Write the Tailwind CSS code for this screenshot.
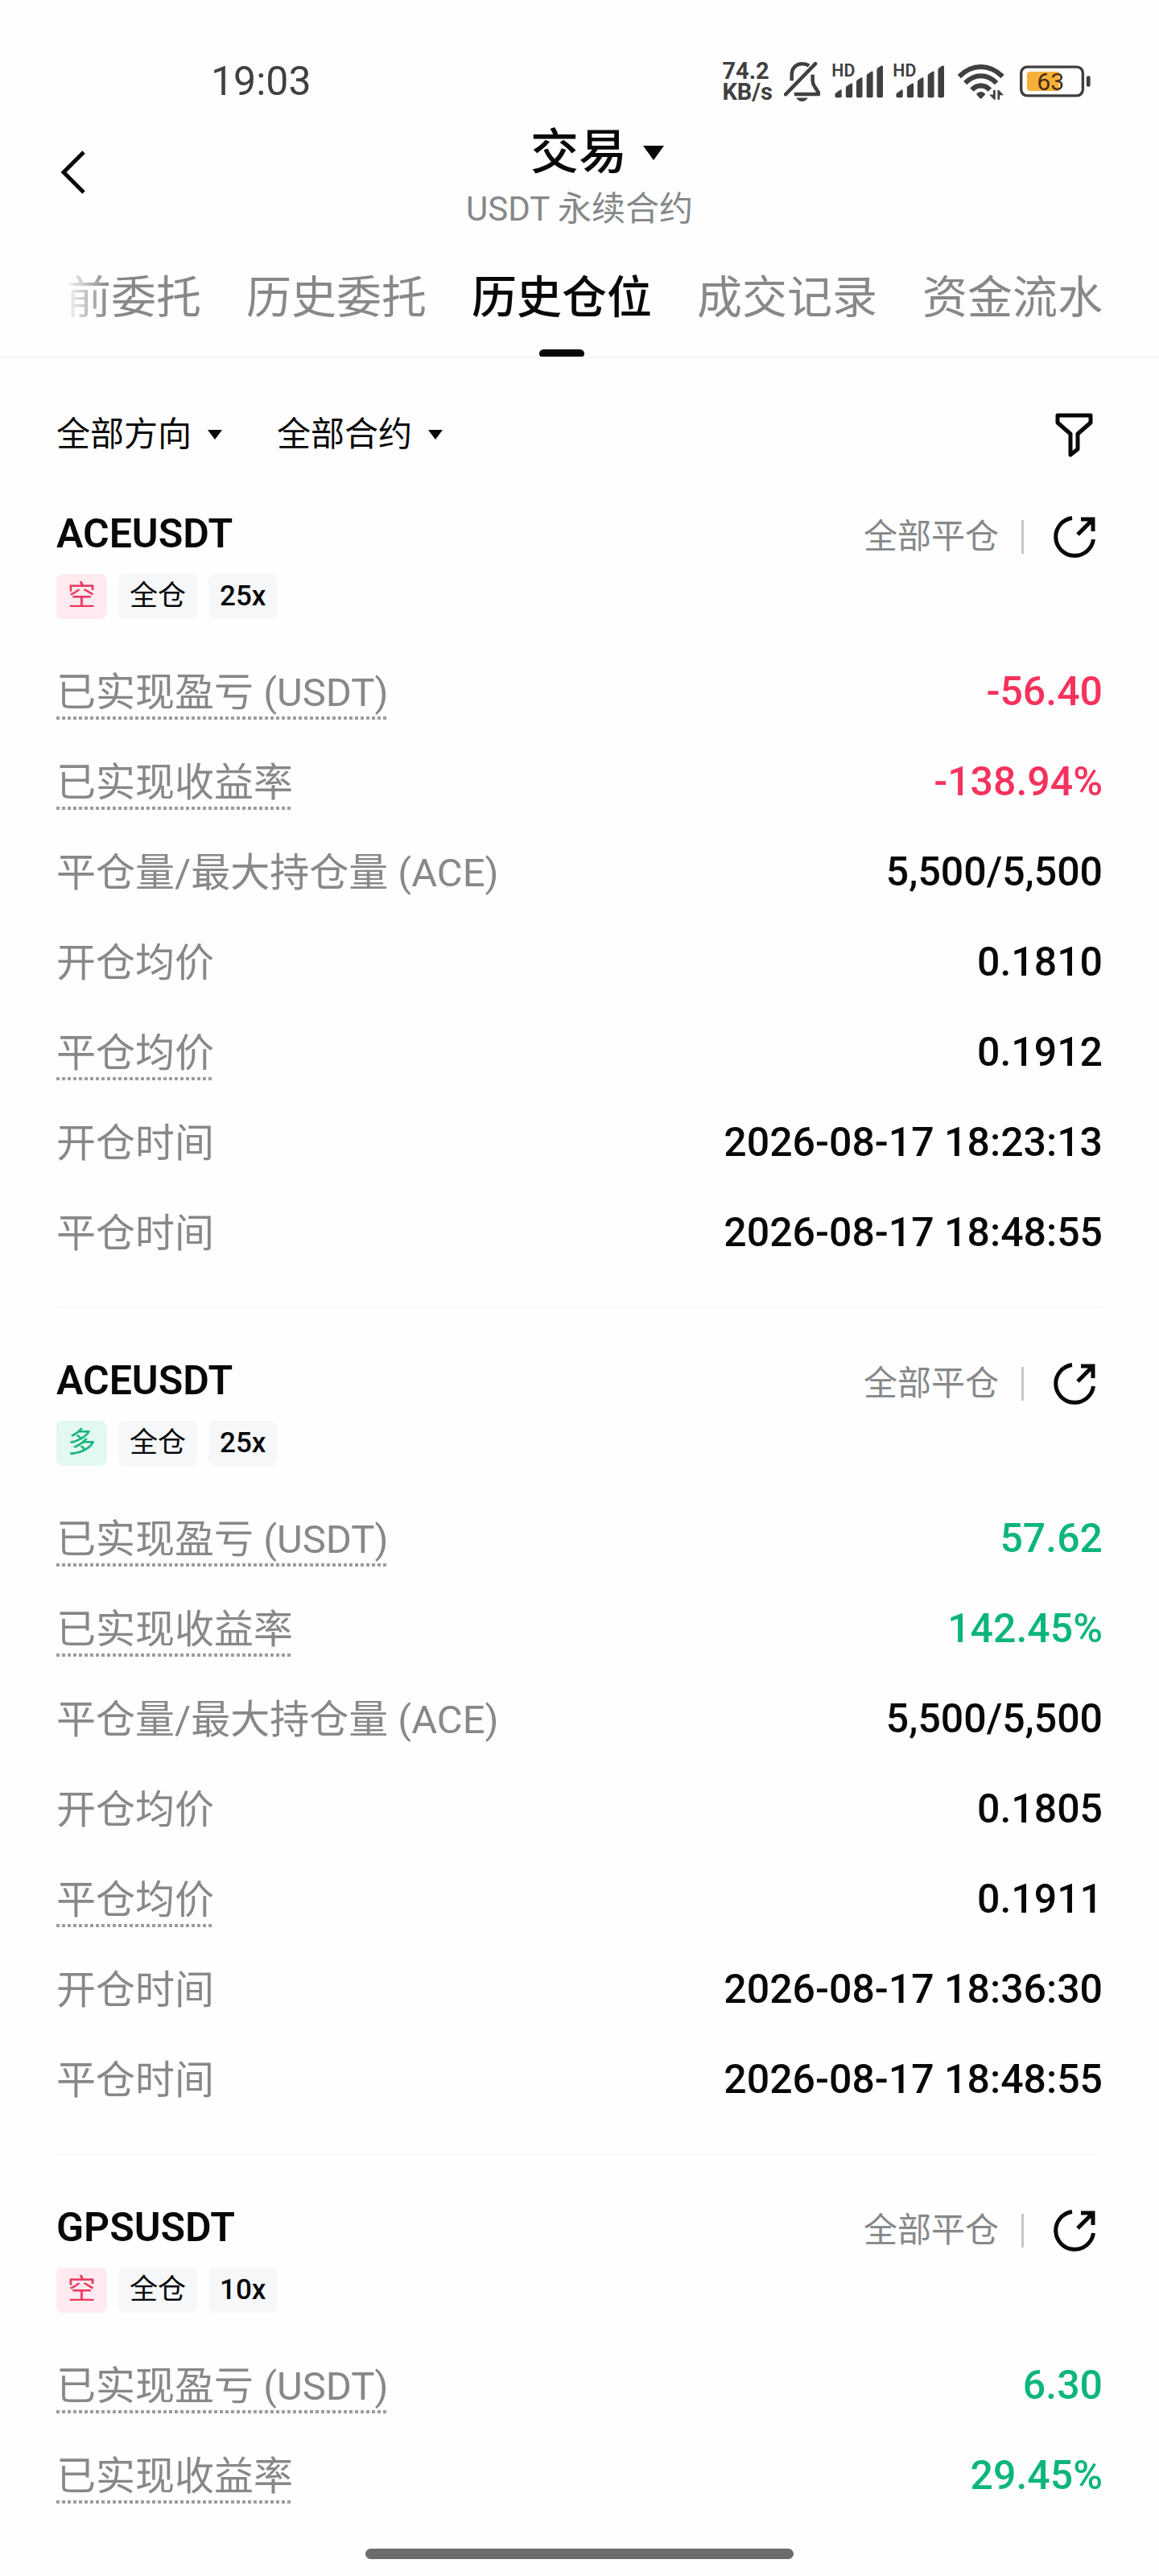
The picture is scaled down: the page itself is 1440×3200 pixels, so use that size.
<!DOCTYPE html>
<html lang="zh-CN">
<head>
    <title>交易 - 历史仓位</title>
    <meta charset="utf-8" />
    <meta name="viewport" content="width=device-width, initial-scale=1.0">
    <script src="https://cdn.jsdelivr.net/npm/@tailwindcss/browser@4"></script>
</head>
<body class="relative flex min-h-screen flex-col bg-[#fefefe] font-[Roboto,'Noto_Sans_CJK_SC',sans-serif] text-[#070808]">

    <!-- Status bar -->
    <div class="flex h-[150px] items-center justify-between pt-[52px] pr-[85px] pl-[262px] text-[#404040]">
        <span class="text-[50px] leading-none">19:03</span>
        <div class="flex items-center">
            <div class="mr-[14px] text-[29px] leading-[26px] font-bold">
                <div>74.2</div>
                <div>KB/s</div>
            </div>
            <!-- Muted bell -->
            <svg class="mr-[15px] h-[50px] w-[45px]" viewBox="334 78 130 144" fill="none" stroke="currentColor">
                <path d="M362 148v-22c0-24 16-39 38-39 9 0 17 2 24 7" stroke-width="13"/>
                <path d="M437 126v22c0 10 3 16 9 24l13 20c2 3 1 4-2 4h-86" stroke-width="13"/>
                <path d="M340 197L447 87" stroke-width="13" stroke-linecap="round"/>
                <path d="M378 209h42c-4 8-12 13-21 13s-17-5-21-13z" fill="currentColor" stroke="none"/>
            </svg>
            <!-- Signal 1 -->
            <svg class="mr-[13px] h-[42px] w-[63px] overflow-visible" viewBox="505 88 183 122" fill="currentColor">
                <text x="503" y="132" font-size="62" font-weight="600" font-family="Roboto">HD</text>
                <path d="M515 197q0-4 3-6l15-11q6-3 6 4v19q0 5-5 5h-14q-5 0-5-5zM554 172q0-4 4-6l14-9q6-3 6 3v43q0 5-5 5h-14q-5 0-5-5zM592 151q0-5 4-7l12-8q6-3 6 3v64q0 5-5 5h-12q-5 0-5-5zM629 129q0-5 4-7l12-8q7-3 7 3v86q0 5-5 5h-13q-5 0-5-5zM666 107q0-5 4-7l11-7q7-3 7 3v107q0 5-5 5h-12q-5 0-5-5z"/>
            </svg>
            <!-- Signal 2 -->
            <svg class="mr-[17px] h-[42px] w-[63px] overflow-visible" viewBox="505 88 183 122" fill="currentColor">
                <text x="503" y="132" font-size="62" font-weight="600" font-family="Roboto">HD</text>
                <path d="M515 197q0-4 3-6l15-11q6-3 6 4v19q0 5-5 5h-14q-5 0-5-5zM554 172q0-4 4-6l14-9q6-3 6 3v43q0 5-5 5h-14q-5 0-5-5zM592 151q0-5 4-7l12-8q6-3 6 3v64q0 5-5 5h-12q-5 0-5-5zM629 129q0-5 4-7l12-8q7-3 7 3v86q0 5-5 5h-13q-5 0-5-5zM666 107q0-5 4-7l11-7q7-3 7 3v107q0 5-5 5h-12q-5 0-5-5z"/>
            </svg>
            <!-- Wi-Fi -->
            <svg class="mr-[19px] h-[45px] w-[58px]" viewBox="958 84 170 132" fill="none" stroke="currentColor">
                <path d="M963 131c48-47 110-47 158 0" stroke-width="18"/>
                <path d="M985 155c34-35 80-35 114 0" stroke-width="18"/>
                <path d="M1009 180c20-21 46-21 66 0" stroke-width="18"/>
                <path d="M1026 194q16-14 32 0 0 3-3 6l-10 11q-3 2-6 0l-10-11q-3-3-3-6z" fill="currentColor" stroke="none"/>
                <path d="M1095 181v34h-5l-17-18h14v-16zM1103 215v-34h5l17 18h-14v16z" fill="currentColor" stroke="none"/>
            </svg>
            <!-- Battery -->
            <svg class="h-[40px] w-[88px]" viewBox="1182 90 256 116">
                <rect x="1187" y="96" width="223" height="104" rx="22" fill="none" stroke="#404040" stroke-width="10"/>
                <path d="M1220 113h104v70h-104q-12 0-12-12v-46q0-12 12-12z" fill="#f5b03a"/>
                <rect x="1423" y="128" width="14" height="40" rx="7" fill="#404040"/>
                <text x="1293" y="180" text-anchor="middle" font-size="88" font-family="Roboto" fill="#4a2c12">63</text>
            </svg>
        </div>
    </div>

    <!-- Page header -->
    <header class="grid grid-cols-[1fr_auto_1fr] items-start px-[70px]">
        <button type="button" aria-label="返回" class="mt-[36px] justify-self-start pl-1">
            <svg class="h-[56px] w-[34px]" viewBox="0 0 34 56" fill="none" stroke="currentColor" stroke-width="5">
                <path d="M30 3L5 28L30 53"/>
            </svg>
        </button>
        <div class="flex flex-col items-center pt-1">
            <button type="button" aria-haspopup="menu" class="ml-11 flex items-center gap-5 text-[60px] leading-[72px] font-medium">
                交易
                <svg class="h-[18px] w-[26px]" viewBox="0 0 26 18" fill="currentColor"><path d="M0 0h26L13 18z"/></svg>
            </button>
            <p class="text-[42px] leading-[68px] text-[#868889]">USDT 永续合约</p>
        </div>
    </header>

    <!-- Tabs, scrolled to the right end -->
    <nav class="border-b-2 border-[#f4f5f5] px-[70px] pt-[34px]">
        <div class="relative flex h-[115px] justify-end overflow-hidden">
            <div class="flex shrink-0 gap-14 text-[56px] leading-[84px] whitespace-nowrap text-[#868889]">
                <a href="#">当前委托</a>
                <a href="#">历史委托</a>
                <a href="#" class="flex flex-col items-center justify-between font-medium text-[#070808]">
                    历史仓位
                    <span class="h-[9px] w-14 rounded-t-md rounded-b-sm bg-[#070808]"></span>
                </a>
                <a href="#">成交记录</a>
                <a href="#">资金流水</a>
            </div>
            <div class="absolute inset-y-0 left-0 w-16 bg-linear-to-r from-[#fefefe] from-15% to-transparent"></div>
        </div>
    </nav>

    <!-- Filters -->
    <div class="flex h-[190px] items-center px-[70px]">
        <label class="mr-[68px] flex items-center gap-[19px]">
            <select aria-label="方向" class="appearance-none text-[42px] leading-[60px]">
                <option>全部方向</option>
            </select>
            <svg class="h-3 w-[18px]" viewBox="0 0 18 12" fill="currentColor"><path d="M0 0h18L9 12z"/></svg>
        </label>
        <label class="flex items-center gap-[19px]">
            <select aria-label="合约" class="appearance-none text-[42px] leading-[60px]">
                <option>全部合约</option>
            </select>
            <svg class="h-3 w-[18px]" viewBox="0 0 18 12" fill="currentColor"><path d="M0 0h18L9 12z"/></svg>
        </label>
        <button type="button" aria-label="筛选" class="mr-3 ml-auto">
            <svg class="h-[55px] w-[47px]" viewBox="0 0 47 55" fill="none" stroke="currentColor" stroke-width="5" stroke-linejoin="round">
                <path d="M3 3h41v9L28 26v19l-9 7V26L3 12z"/>
            </svg>
        </button>
    </div>

    <main class="px-[70px]">
        <!-- Position 1 -->
        <section class="border-b-2 border-[#f8f8f8] pb-[34px]">
            <div class="flex h-16 items-center">
                <h2 class="mr-auto pb-2 text-[50px] leading-[60px] font-semibold">ACEUSDT</h2>
                <span class="text-[42px] leading-[60px] text-[#868889]">全部平仓</span>
                <span class="mx-[28px] h-[42px] w-[3px] bg-[#c6c7c7]"></span>
                <button type="button" aria-label="分享" class="mr-2 ml-2">
                    <svg class="h-[54px] w-[54px]" viewBox="0 0 54 54" fill="none" stroke="currentColor" stroke-width="5">
                        <path d="M24 3.5A23.5 23.5 0 1 0 50.5 30"/>
                        <path d="M35 5h15v15M49 6L31 24"/>
                        <path d="M41 5h9v9z" fill="currentColor" stroke="none"/>
                    </svg>
                </button>
            </div>
            <div class="mt-[14px] flex gap-[14px] text-[35px] leading-[56px] font-medium">
                <span class="rounded-lg bg-[#ffebef] px-[14px] font-normal text-[#ea3a61]">空</span>
                <span class="rounded-lg bg-[#f5f7f8] px-[14px] font-normal">全仓</span>
                <span class="rounded-lg bg-[#f5f7f8] px-[14px]">25x</span>
            </div>
            <dl class="mt-[36px] [&_dd]:pb-1 [&_dd]:text-[50px] [&_dd]:font-medium [&_dt]:text-[49px] [&_dt]:leading-[66px] [&_dt]:text-[#868889] [&>div]:flex [&>div]:h-28 [&>div]:items-center [&>div]:justify-between">
                <div>
                    <dt class="bg-[repeating-linear-gradient(90deg,#9c9d9d_0_4px,transparent_4px_7px)] bg-[length:100%_4px] bg-bottom bg-no-repeat">已实现盈亏 (USDT)</dt>
                    <dd class="text-[#f5325d]">-56.40</dd>
                </div>
                <div>
                    <dt class="bg-[repeating-linear-gradient(90deg,#9c9d9d_0_4px,transparent_4px_7px)] bg-[length:100%_4px] bg-bottom bg-no-repeat">已实现收益率</dt>
                    <dd class="text-[#f5325d]">-138.94%</dd>
                </div>
                <div>
                    <dt>平仓量/最大持仓量 (ACE)</dt>
                    <dd>5,500/5,500</dd>
                </div>
                <div>
                    <dt>开仓均价</dt>
                    <dd>0.1810</dd>
                </div>
                <div>
                    <dt class="bg-[repeating-linear-gradient(90deg,#9c9d9d_0_4px,transparent_4px_7px)] bg-[length:100%_4px] bg-bottom bg-no-repeat">平仓均价</dt>
                    <dd>0.1912</dd>
                </div>
                <div>
                    <dt>开仓时间</dt>
                    <dd>2026-08-17 18:23:13</dd>
                </div>
                <div>
                    <dt>平仓时间</dt>
                    <dd>2026-08-17 18:48:55</dd>
                </div>
            </dl>
        </section>

        <!-- Position 2 -->
        <section class="border-b-2 border-[#f8f8f8] pt-[62px] pb-[34px]">
            <div class="flex h-16 items-center">
                <h2 class="mr-auto pb-2 text-[50px] leading-[60px] font-semibold">ACEUSDT</h2>
                <span class="text-[42px] leading-[60px] text-[#868889]">全部平仓</span>
                <span class="mx-[28px] h-[42px] w-[3px] bg-[#c6c7c7]"></span>
                <button type="button" aria-label="分享" class="mr-2 ml-2">
                    <svg class="h-[54px] w-[54px]" viewBox="0 0 54 54" fill="none" stroke="currentColor" stroke-width="5">
                        <path d="M24 3.5A23.5 23.5 0 1 0 50.5 30"/>
                        <path d="M35 5h15v15M49 6L31 24"/>
                        <path d="M41 5h9v9z" fill="currentColor" stroke="none"/>
                    </svg>
                </button>
            </div>
            <div class="mt-[14px] flex gap-[14px] text-[35px] leading-[56px] font-medium">
                <span class="rounded-lg bg-[#e2f8f0] px-[14px] font-normal text-[#16b47e]">多</span>
                <span class="rounded-lg bg-[#f5f7f8] px-[14px] font-normal">全仓</span>
                <span class="rounded-lg bg-[#f5f7f8] px-[14px]">25x</span>
            </div>
            <dl class="mt-[36px] [&_dd]:pb-1 [&_dd]:text-[50px] [&_dd]:font-medium [&_dt]:text-[49px] [&_dt]:leading-[66px] [&_dt]:text-[#868889] [&>div]:flex [&>div]:h-28 [&>div]:items-center [&>div]:justify-between">
                <div>
                    <dt class="bg-[repeating-linear-gradient(90deg,#9c9d9d_0_4px,transparent_4px_7px)] bg-[length:100%_4px] bg-bottom bg-no-repeat">已实现盈亏 (USDT)</dt>
                    <dd class="text-[#0db57c]">57.62</dd>
                </div>
                <div>
                    <dt class="bg-[repeating-linear-gradient(90deg,#9c9d9d_0_4px,transparent_4px_7px)] bg-[length:100%_4px] bg-bottom bg-no-repeat">已实现收益率</dt>
                    <dd class="text-[#0db57c]">142.45%</dd>
                </div>
                <div>
                    <dt>平仓量/最大持仓量 (ACE)</dt>
                    <dd>5,500/5,500</dd>
                </div>
                <div>
                    <dt>开仓均价</dt>
                    <dd>0.1805</dd>
                </div>
                <div>
                    <dt class="bg-[repeating-linear-gradient(90deg,#9c9d9d_0_4px,transparent_4px_7px)] bg-[length:100%_4px] bg-bottom bg-no-repeat">平仓均价</dt>
                    <dd>0.1911</dd>
                </div>
                <div>
                    <dt>开仓时间</dt>
                    <dd>2026-08-17 18:36:30</dd>
                </div>
                <div>
                    <dt>平仓时间</dt>
                    <dd>2026-08-17 18:48:55</dd>
                </div>
            </dl>
        </section>

        <!-- Position 3 -->
        <section class="pt-[62px]">
            <div class="flex h-16 items-center">
                <h2 class="mr-auto pb-2 text-[50px] leading-[60px] font-semibold">GPSUSDT</h2>
                <span class="text-[42px] leading-[60px] text-[#868889]">全部平仓</span>
                <span class="mx-[28px] h-[42px] w-[3px] bg-[#c6c7c7]"></span>
                <button type="button" aria-label="分享" class="mr-2 ml-2">
                    <svg class="h-[54px] w-[54px]" viewBox="0 0 54 54" fill="none" stroke="currentColor" stroke-width="5">
                        <path d="M24 3.5A23.5 23.5 0 1 0 50.5 30"/>
                        <path d="M35 5h15v15M49 6L31 24"/>
                        <path d="M41 5h9v9z" fill="currentColor" stroke="none"/>
                    </svg>
                </button>
            </div>
            <div class="mt-[14px] flex gap-[14px] text-[35px] leading-[56px] font-medium">
                <span class="rounded-lg bg-[#ffebef] px-[14px] font-normal text-[#ea3a61]">空</span>
                <span class="rounded-lg bg-[#f5f7f8] px-[14px] font-normal">全仓</span>
                <span class="rounded-lg bg-[#f5f7f8] px-[14px]">10x</span>
            </div>
            <dl class="mt-[36px] [&_dd]:pb-1 [&_dd]:text-[50px] [&_dd]:font-medium [&_dt]:text-[49px] [&_dt]:leading-[66px] [&_dt]:text-[#868889] [&>div]:flex [&>div]:h-28 [&>div]:items-center [&>div]:justify-between">
                <div>
                    <dt class="bg-[repeating-linear-gradient(90deg,#9c9d9d_0_4px,transparent_4px_7px)] bg-[length:100%_4px] bg-bottom bg-no-repeat">已实现盈亏 (USDT)</dt>
                    <dd class="text-[#0db57c]">6.30</dd>
                </div>
                <div>
                    <dt class="bg-[repeating-linear-gradient(90deg,#9c9d9d_0_4px,transparent_4px_7px)] bg-[length:100%_4px] bg-bottom bg-no-repeat">已实现收益率</dt>
                    <dd class="text-[#0db57c]">29.45%</dd>
                </div>
            </dl>
        </section>
    </main>

    <!-- Home indicator -->
    <div class="mx-auto mt-auto mb-[21px] h-[13px] w-[37%] rounded-full bg-[#6b6b6b]"></div>

</body>
</html>
